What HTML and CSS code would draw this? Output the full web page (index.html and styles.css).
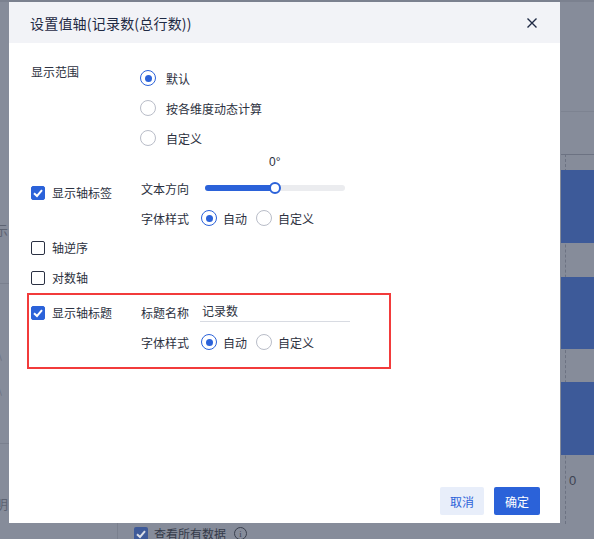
FILE: index.html
```html
<!DOCTYPE html>
<html lang="zh">
<head>
<meta charset="utf-8">
<link rel="stylesheet" href="styles.css">
</head>
<body>
<div class="app">
  <div class="app-top"></div>
  <div class="app-main">
    <div class="app-left">
      <div class="left-cell">示</div>
      <div class="left-line l1"></div>
      <div class="left-mark m1">\</div>
      <div class="left-mark m2">\</div>
      <div class="left-line l2"></div>
      <div class="left-cell c2">明</div>
    </div>
    <div class="app-center"></div>
    <div class="app-chart">
      <div class="chart-faint"></div>
      <div class="chart-axis"></div>
      <div class="bar b1"></div>
      <div class="bar b2"></div>
      <div class="bar b3"></div>
      <div class="chart-zero">0</div>
    </div>
  </div>
  <div class="app-bottom">
    <div class="bottom-divider"></div>
    <span class="bottom-check"><svg viewBox="0 0 14 14" width="14" height="14"><path d="M3 7.2 L6 10 L11 4.2" fill="none" stroke="#d9dde6" stroke-width="2"/></svg></span>
    <span class="bottom-text">查看所有数据</span>
    <span class="bottom-info">i</span>
  </div>
</div>

<div class="modal">
  <div class="modal-header">
    <span class="modal-title">设置值轴(记录数(总行数))</span>
    <svg class="modal-close" viewBox="0 0 12 12" width="12" height="12"><path d="M1.5 1.5 L10.5 10.5 M10.5 1.5 L1.5 10.5" stroke="#1f2a44" stroke-width="1.4" fill="none"/></svg>
  </div>
  <div class="modal-body">
    <div class="section range">
      <div class="label">显示范围</div>
      <div class="content">
        <div class="line"><span class="radio on"></span><span class="opt">默认</span></div>
        <div class="line"><span class="radio"></span><span class="opt">按各维度动态计算</span></div>
        <div class="line"><span class="radio"></span><span class="opt">自定义</span></div>
      </div>
    </div>

    <div class="section centered">
      <div class="label check-label"><span class="checkbox on"><svg viewBox="0 0 14 14" width="14" height="14"><path d="M3 7.2 L6 10 L11 4.2" fill="none" stroke="#fff" stroke-width="2"/></svg></span>显示轴标签</div>
      <div class="content">
        <div class="angle-line"><span class="angle">0°</span></div>
        <div class="line"><span class="field">文本方向</span>
          <div class="slider"><div class="slider-fill"></div><div class="slider-handle"></div></div>
        </div>
        <div class="line"><span class="field">字体样式</span>
          <span class="radio sm on"></span><span class="opt sm">自动</span>
          <span class="radio sm"></span><span class="opt sm">自定义</span>
        </div>
      </div>
    </div>

    <div class="section single">
      <div class="label check-label"><span class="checkbox"></span>轴逆序</div>
    </div>
    <div class="section single">
      <div class="label check-label"><span class="checkbox"></span>对数轴</div>
    </div>

    <div class="highlight">
      <div class="section">
        <div class="label check-label top"><span class="checkbox on"><svg viewBox="0 0 14 14" width="14" height="14"><path d="M3 7.2 L6 10 L11 4.2" fill="none" stroke="#fff" stroke-width="2"/></svg></span>显示轴标题</div>
        <div class="content">
          <div class="line"><span class="field">标题名称</span><span class="input">记录数</span></div>
          <div class="line"><span class="field">字体样式</span>
            <span class="radio sm on"></span><span class="opt sm">自动</span>
            <span class="radio sm"></span><span class="opt sm">自定义</span>
          </div>
        </div>
      </div>
    </div>
  </div>
  <div class="modal-footer">
    <button class="btn cancel">取消</button>
    <button class="btn ok">确定</button>
  </div>
</div>
</body>
</html>
```

FILE: styles.css
```css
* { box-sizing: border-box; }
html, body { margin: 0; padding: 0; }
body {
  width: 594px;
  height: 539px;
  overflow: hidden;
  background: #868c9a;
  font-family: "Noto Sans CJK SC", "Noto Sans", sans-serif;
  position: relative;
}

/* background app seen through the overlay */
.app { width: 594px; height: 539px; display: flex; flex-direction: column; }
.app-top { height: 2px; background: #7b818f; }
.app-main { flex: 1; display: flex; }
.app-left { width: 9px; position: relative; overflow: hidden; }
.left-cell { position: absolute; left: -5px; top: 218px; font-size: 13px; color: #5d6372; }
.left-cell.c2 { top: 492px; }
.left-line { position: absolute; left: 0; width: 9px; height: 1px; background: #7a808e; }
.left-line.l1 { top: 281px; }
.left-line.l2 { top: 441px; }
.left-mark { position: absolute; left: -2px; font-size: 10px; color: #6a7080; }
.left-mark.m1 { top: 345px; }
.left-mark.m2 { top: 380px; }
.app-center { flex: 1; }
.app-chart { width: 33px; position: relative; }
.chart-faint { position: absolute; left: 0; right: 0; top: 109px; height: 1px; background: #7d8391; }
.chart-axis { position: absolute; left: 0; right: 0; top: 152px; height: 1px; background: #6c7282; }
.app-chart::before { content: ""; position: absolute; left: 4px; top: 152px; height: 370px; border-left: 1px dashed #6c7282; }
.bar { position: absolute; left: 0; right: 0; background: #3d5a99; }
.b1 { top: 168px; height: 73px; }
.b2 { top: 275px; height: 72px; }
.b3 { top: 380px; height: 73px; }
.chart-zero { position: absolute; left: 8px; top: 471px; font-size: 13px; color: #3d4352; font-family: "Liberation Sans", sans-serif; }
.app-bottom { height: 16px; position: relative; }
.bottom-divider { position: absolute; left: 117px; top: 0; width: 1px; height: 16px; background: #7a808e; }
.bottom-check { position: absolute; left: 134px; top: 4px; width: 14px; height: 14px; background: #3e5a99; border-radius: 2px; display: flex; }
.bottom-text { position: absolute; left: 154px; top: 2px; font-size: 12px; color: #353b49; line-height: 18px; }
.bottom-info { position: absolute; left: 234px; top: 4px; width: 13px; height: 13px; border: 1px solid #3a404e; border-radius: 50%; font-size: 9px; line-height: 12px; text-align: center; color: #3a404e; font-family: "Liberation Serif", serif; }

/* modal */
.modal {
  position: absolute;
  left: 9px;
  top: 2px;
  width: 551px;
  height: 521px;
  background: #fff;
  display: flex;
  flex-direction: column;
}
.modal-header {
  height: 41px;
  background: #f2f3f7;
  display: flex;
  align-items: center;
  justify-content: space-between;
  padding: 0 22px 0 21px;
}
.modal-title { font-size: 14px; color: #1f2a44; letter-spacing: 0.2px; }
.modal-close { display: block; margin-top: 1px; }

.modal-body { flex: 1; padding: 20px 0 0 22px; display: flex; flex-direction: column; }
.section { display: flex; }
.section.centered { align-items: center; }
.label { width: 110px; font-size: 12px; color: #2c3140; line-height: 18px; flex-shrink: 0; }
.content { display: flex; flex-direction: column; }
.line { height: 30px; display: flex; align-items: center; font-size: 12px; color: #2c3140; }
.section.single { height: 30px; align-items: center; }
.check-label { display: flex; align-items: center; }
.check-label.top { height: 30px; align-self: flex-start; margin-top: 1px; }

.checkbox {
  width: 14px; height: 14px; border: 1.5px solid #2a3042; border-radius: 2px;
  margin-right: 7px; display: inline-flex; align-items: center; justify-content: center; flex-shrink: 0;
}
.checkbox.on { background: #2b62d9; border-color: #2b62d9; }
.checkbox svg { display: block; margin: -1.5px; }

.radio {
  width: 16px; height: 16px; border-radius: 50%; border: 1px solid #b9bdc8; background: #fff;
  display: inline-block; margin-right: 10px; position: relative; flex-shrink: 0; margin-left: -1px;
}
.radio.on { border-color: #2b62d9; }
.radio.on::after { content: ""; position: absolute; left: 3.5px; top: 3.5px; width: 7px; height: 7px; border-radius: 50%; background: #2b62d9; }
.radio.sm { margin-right: 6px; margin-left: 0; }
.opt.sm { margin-right: 9px; }

.field { width: 48px; margin-right: 12px; }
.angle-line { height: 20px; font-size: 12px; color: #2c3140; position: relative; }
.angle { position: absolute; left: 128px; top: 2px; font-family: "Liberation Sans", sans-serif; }

.slider { width: 140px; height: 6px; border-radius: 3px; background: #ebecef; position: relative; margin-left: 4px; }
.slider-fill { width: 70px; height: 6px; border-radius: 3px; background: #2b62d9; }
.slider-handle { position: absolute; left: 64px; top: -3px; width: 12px; height: 12px; border-radius: 50%; border: 2px solid #2b62d9; background: #fff; }

.highlight {
  border: 2px solid #f23b3b;
  width: 364px;
  margin-left: -4px;
  padding: 2px 0 10px 2px;
}
.input {
  width: 150px; border-bottom: 1px solid #d8dbe2; margin-left: -1px;
  padding: 0 2px; line-height: 28px; height: 25px; align-self: flex-start;
}

.modal-footer { display: flex; justify-content: flex-end; gap: 10px; padding: 0 20px 8px 0; }
.btn {
  height: 28px; border: none; border-radius: 2px; font-family: inherit; font-size: 12px; padding: 0; cursor: pointer;
}
.btn.cancel { width: 44px; background: #e8eefa; color: #2b62d9; }
.btn.ok { width: 46px; background: #2b62d9; color: #fff; }
```
